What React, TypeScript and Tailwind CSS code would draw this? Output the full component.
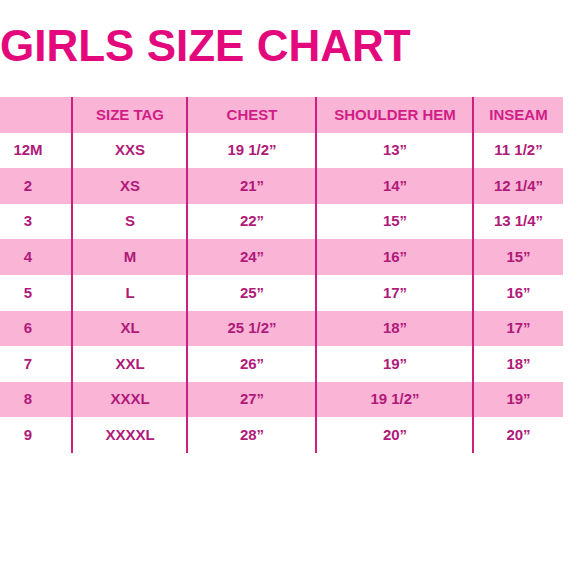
const rows: string[][] = [
  ["12M", "XXS", "19 1/2”", "13”", "11 1/2”"],
  ["2", "XS", "21”", "14”", "12 1/4”"],
  ["3", "S", "22”", "15”", "13 1/4”"],
  ["4", "M", "24”", "16”", "15”"],
  ["5", "L", "25”", "17”", "16”"],
  ["6", "XL", "25 1/2”", "18”", "17”"],
  ["7", "XXL", "26”", "19”", "18”"],
  ["8", "XXXL", "27”", "19 1/2”", "19”"],
  ["9", "XXXXL", "28”", "20”", "20”"],
];

const headers = ["", "SIZE TAG", "CHEST", "SHOULDER HEM", "INSEAM"];

const SizeRow = ({ cells, pink, header }: { cells: string[]; pink: boolean; header?: boolean }) => (
  <div
    className={`grid grid-cols-[72px_115px_129px_157px_90px] h-[35.6px] ${
      pink ? "bg-[#fab4d6]" : "bg-white"
    } ${header ? "text-[#d21d86]" : "text-[#b01a79]"}`}
  >
    {cells.map((c, i) => (
      <div
        key={i}
        className={`flex items-center justify-center ${
          i === 0 ? "pr-4" : "border-l-2 border-[#cc1f80] -ml-[1px]"
        }`}
      >
        {c}
      </div>
    ))}
  </div>
);

export default function App() {
  return (
    <div className="w-[580px] h-[580px] bg-white overflow-hidden font-['Liberation_Sans',Arial,sans-serif]">
      <h1 className="mt-[24px] text-[44px] leading-[44px] font-bold text-[#e4087d] whitespace-nowrap">
        GIRLS SIZE CHART
      </h1>

      <div className="mt-[29px] w-[563px] text-[15px] font-bold">
        <SizeRow cells={headers} pink header />
        {rows.map((r, i) => (
          <SizeRow key={r[0]} cells={r} pink={i % 2 === 1} />
        ))}
      </div>
    </div>
  );
}
